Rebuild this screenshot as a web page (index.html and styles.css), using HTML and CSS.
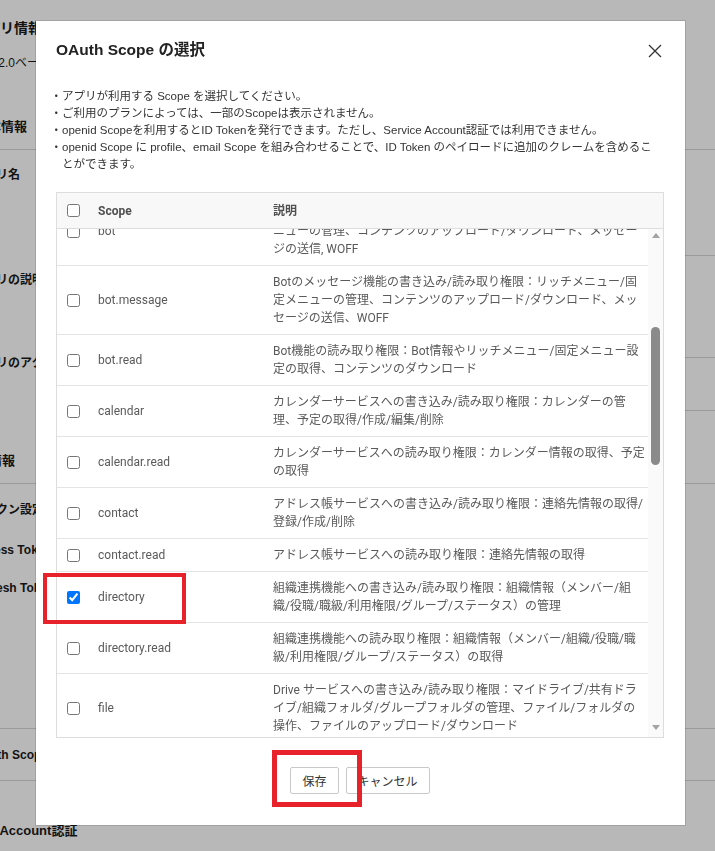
FILE: index.html
```html
<!DOCTYPE html>
<html lang="ja">
<head>
	<meta charset="utf-8">
	<meta name="viewport" content="width=device-width, initial-scale=1">
	<title>OAuth Scope の選択</title>
	<link rel="stylesheet" href="styles.css">
</head>
<body>
	<main class="page">
		<h1 class="page-title">アプリ情報</h1>
		<p class="page-lead">OAuth 2.0ベースの API を利用するためのアプリを管理します。</p>

		<section class="section">
			<h2 class="section-title section-basic">基本情報</h2>
			<div class="field field-name">
				<div class="field-label">アプリ名</div>
				<div class="field-value"></div>
			</div>
			<div class="field field-desc">
				<div class="field-label">アプリの説明</div>
				<div class="field-value"></div>
			</div>
			<div class="field field-access">
				<div class="field-label">アプリのアクセス</div>
				<div class="field-value"></div>
			</div>
		</section>

		<section class="section">
			<h2 class="section-title section-auth">認証情報</h2>
			<div class="field field-token">
				<div class="field-label">
					<div>トークン設定</div>
					<div>Access Token</div>
					<div>Refresh Token</div>
				</div>
				<div class="field-value"></div>
			</div>
			<div class="field field-scope">
				<div class="field-label">OAuth Scopes</div>
				<div class="field-value"></div>
			</div>
		</section>

		<h2 class="section-title section-last">Service Account認証</h2>
	</main>

	<div class="backdrop"></div>

	<div class="modal">
		<div class="modal-head">
			<h2 class="modal-title">OAuth Scope の選択</h2>
			<button class="modal-close" type="button">
				<svg width="14" height="14" viewBox="0 0 14 14"><path d="M1 1L13 13M13 1L1 13" stroke="#333" stroke-width="1.3" fill="none"/></svg>
			</button>
		</div>

		<ul class="notes">
			<li>アプリが利用する Scope を選択してください。</li>
			<li>ご利用のプランによっては、一部のScopeは表示されません。</li>
			<li>openid Scopeを利用するとID Tokenを発行できます。ただし、Service Account認証では利用できません。</li>
			<li>openid Scope に profile、email Scope を組み合わせることで、ID Token のペイロードに追加のクレームを含めることができます。</li>
		</ul>

		<div class="scope-table">
			<div class="scope-head">
				<div class="scope-check"><input type="checkbox"></div>
				<div>Scope</div>
				<div class="scope-desc">説明</div>
			</div>
			<div class="scope-body">
				<div class="scope-rows">
					<div class="scope-row">
						<div class="scope-check"><input type="checkbox"></div>
						<div>bot</div>
						<div class="scope-desc">Bot機能の書き込み/読み取り権限：Bot情報/リッチメニュー/固定メニューの管理、コンテンツのアップロード/ダウンロード、メッセージの送信, WOFF</div>
					</div>
					<div class="scope-row">
						<div class="scope-check"><input type="checkbox"></div>
						<div>bot.message</div>
						<div class="scope-desc">Botのメッセージ機能の書き込み/読み取り権限：リッチメニュー/固定メニューの管理、コンテンツのアップロード/ダウンロード、メッセージの送信、WOFF</div>
					</div>
					<div class="scope-row">
						<div class="scope-check"><input type="checkbox"></div>
						<div>bot.read</div>
						<div class="scope-desc">Bot機能の読み取り権限：Bot情報やリッチメニュー/固定メニュー設定の取得、コンテンツのダウンロード</div>
					</div>
					<div class="scope-row">
						<div class="scope-check"><input type="checkbox"></div>
						<div>calendar</div>
						<div class="scope-desc">カレンダーサービスへの書き込み/読み取り権限：カレンダーの管理、予定の取得/作成/編集/削除</div>
					</div>
					<div class="scope-row">
						<div class="scope-check"><input type="checkbox"></div>
						<div>calendar.read</div>
						<div class="scope-desc">カレンダーサービスへの読み取り権限：カレンダー情報の取得、予定の取得</div>
					</div>
					<div class="scope-row">
						<div class="scope-check"><input type="checkbox"></div>
						<div>contact</div>
						<div class="scope-desc">アドレス帳サービスへの書き込み/読み取り権限：連絡先情報の取得/登録/作成/削除</div>
					</div>
					<div class="scope-row">
						<div class="scope-check"><input type="checkbox"></div>
						<div>contact.read</div>
						<div class="scope-desc">アドレス帳サービスへの読み取り権限：連絡先情報の取得</div>
					</div>
					<div class="scope-row">
						<div class="scope-check"><input type="checkbox" checked></div>
						<div>directory</div>
						<div class="scope-desc">組織連携機能への書き込み/読み取り権限：組織情報（メンバー/組織/役職/職級/利用権限/グループ/ステータス）の管理</div>
					</div>
					<div class="scope-row">
						<div class="scope-check"><input type="checkbox"></div>
						<div>directory.read</div>
						<div class="scope-desc">組織連携機能への読み取り権限：組織情報（メンバー/組織/役職/職級/利用権限/グループ/ステータス）の取得</div>
					</div>
					<div class="scope-row">
						<div class="scope-check"><input type="checkbox"></div>
						<div>file</div>
						<div class="scope-desc">Drive サービスへの書き込み/読み取り権限：マイドライブ/共有ドライブ/組織フォルダ/グループフォルダの管理、ファイル/フォルダの操作、ファイルのアップロード/ダウンロード</div>
					</div>
					<div class="scope-row">
						<div class="scope-check"><input type="checkbox"></div>
						<div>file.read</div>
						<div class="scope-desc">Drive サービスへの読み取り権限：ファイル/フォルダの取得、ファイルのダウンロード</div>
					</div>
				</div>
				<div class="scrollbar">
					<span class="scroll-up"></span>
					<span class="scroll-thumb"></span>
					<span class="scroll-down"></span>
				</div>
			</div>
		</div>

		<div class="modal-foot">
			<button class="btn" type="button">保存</button>
			<button class="btn" type="button">キャンセル</button>
		</div>
	</div>

	<div class="mark mark-scope"></div>
	<div class="mark mark-save"></div>
</body>
</html>
```

FILE: styles.css
```css
* {
    box-sizing: border-box;
}
html, body {
    margin: 0;
    height: 100%;
    overflow: hidden;
}
body {
    font-family: "Liberation Sans", "Noto Sans CJK JP", sans-serif;
    color: #1a1a1a;
    background: #fff;
}

/* page behind the dialog */
.page {
    margin-left: -28px;
    width: 780px;
}
.page-title {
    margin: 0;
    padding-top: 18px;
    font-size: 14px;
    line-height: 20px;
}
.page-lead {
    margin: 16px 0 0 -11px;
    font-size: 12px;
    line-height: 18px;
}
.section-title {
    margin: 45px 0 0;
    padding-bottom: 12px;
    font-size: 13px;
    line-height: 20px;
    border-bottom: 1px solid #d6d6d6;
}
.section-basic {
    padding-left: 3px;
}
.section-auth {
    margin: 40px 0 0 -9px;
    padding-left: 9px;
    text-indent: -9px;
}
.section-last {
    margin: 40px 0 0 -22px;
    border-bottom: 0;
}
.field {
    display: flex;
    font-size: 12px;
    font-weight: bold;
    line-height: 18px;
}
.field-label {
    width: 130px;
}
.field-value {
    flex: 1;
    border-bottom: 1px solid #d6d6d6;
}
.field-name {
    height: 106px;
}
.field-name .field-label {
    padding-top: 16px;
}
.field-desc {
    height: 102px;
}
.field-desc .field-label {
    padding-top: 15px;
}
.field-access {
    height: 53px;
}
.field-access .field-label {
    margin-top: -4px;
}
.field-token,
.field-scope {
    border-bottom: 1px solid #d6d6d6;
}
.field-token {
    height: 245px;
}
.field-token .field-label {
    padding-top: 17px;
}
.field-token .field-label div + div {
    margin-top: 22px;
}
.field-token .field-label div:last-child {
    margin-top: 20px;
}
.field-scope {
    height: 52px;
}
.field-scope .field-label {
    padding-top: 17px;
}
.field-token .field-value,
.field-scope .field-value {
    border-bottom: 0;
}

.backdrop {
    position: fixed;
    inset: 0;
    background: rgba(0, 0, 0, 0.28);
}

/* dialog */
.modal {
    position: fixed;
    left: 36px;
    top: 21px;
    width: 649px;
    height: 804px;
    padding: 17px 21px 0 20px;
    background: #fff;
    box-shadow: 0 0 0 1px rgba(0, 0, 0, 0.12);
    display: flex;
    flex-direction: column;
}
.modal-head {
    display: flex;
    align-items: center;
    justify-content: space-between;
}
.modal-title {
    margin: 0;
    font-size: 15.5px;
    line-height: 24px;
    color: #222;
}
.modal-close {
    width: 14px;
    height: 14px;
    margin: 1px 2px 0 0;
    padding: 0;
    border: 0;
    background: none;
    display: flex;
}
.notes {
    margin: 26px 0 0;
    padding: 0 5px 0 6px;
    list-style-type: "・";
    font-size: 11.5px;
    line-height: 17px;
    color: #333;
}

.scope-table {
    margin-top: 19px;
    width: 608px;
    border: 1px solid #ddd;
    font-family: Roboto, "Noto Sans CJK JP", sans-serif;
    font-size: 12px;
    color: #5a5a5a;
}
.scope-head {
    display: grid;
    grid-template-columns: 41px 167px 1fr;
    align-items: center;
    height: 36px;
    background: #f8f8f8;
    border-bottom: 1px solid #ddd;
    font-weight: bold;
    color: #505050;
}
.scope-body {
    display: flex;
    height: 508px;
    overflow: hidden;
}
.scope-rows {
    flex: 1;
    margin-top: -32px;
}
.scope-row {
    display: grid;
    grid-template-columns: 41px 167px 1fr;
    align-items: center;
    border-bottom: 1px solid #e4e4e4;
}
.scope-check {
    display: flex;
    padding-left: 6px;
}
.scope-check input {
    margin: 3px 3px 3px 4px;
}
.scope-desc {
    padding: 7px 2px 7px 8px;
    line-height: 18px;
}

.scrollbar {
    width: 15px;
    background: #fafafa;
    display: flex;
    flex-direction: column;
    align-items: center;
}
.scroll-up {
    margin-top: 4px;
    border-left: 4px solid transparent;
    border-right: 4px solid transparent;
    border-bottom: 5px solid #a3a3a3;
}
.scroll-thumb {
    margin-top: 89px;
    width: 9px;
    height: 138px;
    border-radius: 5px;
    background: #8a8a8a;
}
.scroll-down {
    margin-top: auto;
    margin-bottom: 7px;
    border-left: 4px solid transparent;
    border-right: 4px solid transparent;
    border-top: 5px solid #a3a3a3;
}

.modal-foot {
    display: flex;
    justify-content: center;
    gap: 7px;
    margin-top: 29px;
}
.btn {
    height: 27px;
    padding: 0 11px;
    border: 1px solid #c9c9c9;
    border-radius: 2px;
    background: #fff;
    color: #333;
    font-family: "Noto Sans", "Noto Sans CJK JP", sans-serif;
    font-size: 12px;
}

/* red highlight frames */
.mark {
    position: fixed;
    border: 4px solid #e8222b;
}
.mark-scope {
    left: 43px;
    top: 573px;
    width: 143px;
    height: 51px;
}
.mark-save {
    left: 272px;
    top: 750px;
    width: 90px;
    height: 57px;
    border-width: 5px;
}
```
